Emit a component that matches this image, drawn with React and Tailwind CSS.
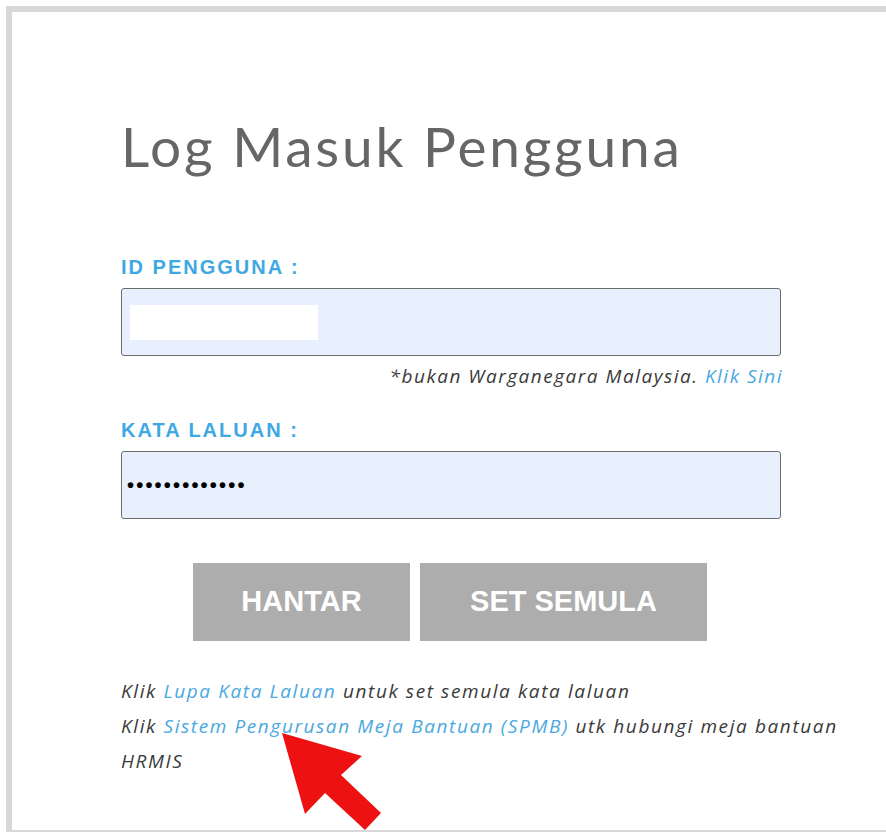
import React from "react";

const sans = { fontFamily: '"Liberation Sans", Arial, sans-serif' };
const body = { fontFamily: '"Open Sans", sans-serif' };

function Field({ label, children }) {
  return (
    <div className="flex flex-col">
      <label
        className="text-[20px] font-bold text-[#3ea8e2] leading-none tracking-[2px]"
        style={sans}
      >
        {label}
      </label>
      {children}
    </div>
  );
}

export default function App() {
  return (
    <div className="relative w-[886px] h-[835px] overflow-hidden bg-white">
      <div className="pt-[6px] pl-[6px]">
        <div className="w-[920px] h-[826px] border-t-[6px] border-l-[6px] border-b-[2px] border-[#d8d8d8] bg-white">
          <div className="pl-[109px] pt-[107px] w-[860px]">
            <h1
              className="text-[55px] leading-none text-[#666666] font-normal tracking-[2.8px]"
              style={{ fontFamily: 'Lato, "Open Sans", sans-serif' }}
            >
              Log Masuk Pengguna
            </h1>

            <div className="mt-[83px]">
              <Field label="ID PENGGUNA :">
                <div className="mt-[11px] h-[68px] w-[660px] rounded-[3px] border border-[#6b6b6b] bg-[#e8f0fe] flex items-center px-[8px]">
                  <div className="h-[35px] w-[188px] bg-white" />
                </div>
              </Field>
              <p
                className="mt-[7px] text-right text-[19px] leading-[26px] italic tracking-[1.5px] text-[#3a3a3a] w-[662px]"
                style={body}
              >
                *bukan Warganegara Malaysia.{" "}
                <span className="text-[#4aa8e0]">Klik Sini</span>
              </p>
            </div>

            <div className="mt-[31px]">
              <Field label="KATA LALUAN :">
                <div className="mt-[11px] h-[68px] w-[660px] rounded-[3px] border border-[#6b6b6b] bg-[#e8f0fe] flex items-center px-[5px]">
                  <span className="text-[20px] leading-none tracking-[2.2px] text-black font-bold" style={sans}>
                    •••••••••••••
                  </span>
                </div>
              </Field>
            </div>

            <div className="mt-[44px] flex gap-[10px] pl-[72px]">
              <button
                className="h-[78px] w-[217px] bg-[#adadad] text-white text-[29px] font-bold"
                style={sans}
              >
                HANTAR
              </button>
              <button
                className="h-[78px] w-[287px] bg-[#adadad] text-white text-[29px] font-bold"
                style={sans}
              >
                SET SEMULA
              </button>
            </div>

            <div
              className="mt-[33px] w-[740px] text-[19px] italic leading-[35px] tracking-[1.6px] text-[#3a3a3a]"
              style={body}
            >
              <p>
                Klik <span className="text-[#4aa8e0]">Lupa Kata Laluan</span> untuk set semula kata laluan
              </p>
              <p>
                Klik <span className="text-[#4aa8e0]">Sistem Pengurusan Meja Bantuan (SPMB)</span> utk hubungi
                meja bantuan HRMIS
              </p>
            </div>
          </div>
        </div>
      </div>

      {/* red pointer arrow */}
      <svg className="absolute left-0 top-0" width="886" height="835" viewBox="0 0 886 835">
        <polygon
          points="282,733 362,756 341,775 381,813 365,830 325,793 305,814"
          fill="#ee1111"
        />
      </svg>
    </div>
  );
}
